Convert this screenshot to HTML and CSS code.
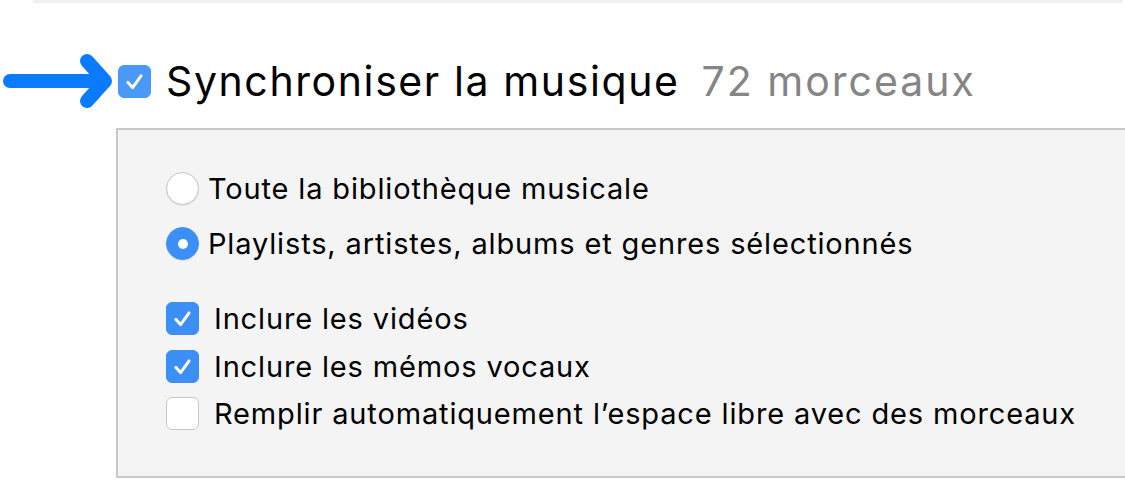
FILE: index.html
```html
<!DOCTYPE html>
<html>
<head>
    <title>Synchroniser la musique</title>
    <link rel="stylesheet" href="styles.css">
</head>
<body>
    <div class="top-rule"></div>

    <div class="sync-header">
        <svg class="pointer" width="114" height="60" viewBox="0 0 114 60">
            <path d="M10 30 H103 M87 10 L105 30 L87 50" fill="none" stroke="#0a7bff" stroke-width="14" stroke-linecap="round" stroke-linejoin="round"/>
        </svg>
        <span class="box box-main checked">
            <svg viewBox="0 0 33 33"><path d="M9.5 17.5 L14.5 23 L23.5 10.5"/></svg>
        </span>
        <h1>Synchroniser la musique<span class="count">72 morceaux</span></h1>
    </div>

    <div class="panel">
        <div class="radio-group">
            <div class="option">
                <span class="radio"></span>
                <span class="label">Toute la bibliothèque musicale</span>
            </div>
            <div class="option">
                <span class="radio selected"></span>
                <span class="label">Playlists, artistes, albums et genres sélectionnés</span>
            </div>
        </div>
        <div class="check-group">
            <div class="option">
                <span class="box checked">
                    <svg viewBox="0 0 33 33"><path d="M9.5 17.5 L14.5 23 L23.5 10.5"/></svg>
                </span>
                <span class="label">Inclure les vidéos</span>
            </div>
            <div class="option">
                <span class="box checked">
                    <svg viewBox="0 0 33 33"><path d="M9.5 17.5 L14.5 23 L23.5 10.5"/></svg>
                </span>
                <span class="label">Inclure les mémos vocaux</span>
            </div>
            <div class="option">
                <span class="box"></span>
                <span class="label">Remplir automatiquement l’espace libre avec des morceaux</span>
            </div>
        </div>
    </div>
</body>
</html>
```

FILE: styles.css
```css
:root {
    --blue: #3b8ff7;
    --arrow: #0a7bff;
    --panel-bg: #f4f4f4;
    --panel-border: #c9c9c9;
    --gray-text: #858585;
    --font-family-body: 'Inter', 'Noto Sans', sans-serif;
}

* { box-sizing: border-box; margin: 0; padding: 0; }

body {
    background: #fff;
    font-family: var(--font-family-body);
    color: #000;
    width: 1125px;
    height: 500px;
    overflow: hidden;
}

.top-rule {
    margin-left: 33px;
    width: 1090px;
    height: 3px;
    background: #f0f0f0;
}

.sync-header {
    display: flex;
    align-items: center;
    margin-top: 48px;
    height: 60px;
}

.pointer {
    flex: none;
}

.box {
    flex: none;
    width: 33px;
    height: 33px;
    border-radius: 6px;
    background: #fff;
    border: 1px solid #c8c8c8;
    display: flex;
    align-items: center;
    justify-content: center;
}

.box.checked {
    background: var(--blue);
    border-color: var(--blue);
}

.box svg {
    width: 33px;
    height: 33px;
}

.box svg path {
    fill: none;
    stroke: #fff;
    stroke-width: 3.2;
    stroke-linecap: round;
    stroke-linejoin: round;
}

.box-main {
    margin-left: 4px;
    margin-right: 15px;
}

.box-main.checked {
    background: #4a98f8;
    border-color: #4a98f8;
}

h1 {
    font-size: 41px;
    font-weight: 400;
    letter-spacing: 1.6px;
    white-space: nowrap;
}

.count {
    color: var(--gray-text);
    margin-left: 22px;
    letter-spacing: 2px;
}

.panel {
    margin-top: 17px;
    margin-left: 116px;
    height: 350px;
    background: var(--panel-bg);
    border: 2px solid var(--panel-border);
    border-right: none;
    padding: 42px 0 0 48px;
}

.radio-group {
    display: flex;
    flex-direction: column;
    gap: 22px;
}

.check-group {
    display: flex;
    flex-direction: column;
    gap: 14.5px;
    margin-top: 42px;
}

.option {
    display: flex;
    align-items: center;
    height: 33px;
}

.label {
    font-size: 29px;
    letter-spacing: 0.85px;
    white-space: nowrap;
}

.radio {
    flex: none;
    width: 33px;
    height: 33px;
    border-radius: 50%;
    background: #fff;
    border: 1px solid #c4c4c4;
    box-shadow: 0 1px 1px rgba(0, 0, 0, 0.08);
    margin-right: 9px;
    display: flex;
    align-items: center;
    justify-content: center;
}

.radio.selected {
    background: var(--blue);
    border-color: var(--blue);
}

.radio.selected::after {
    content: "";
    width: 10px;
    height: 10px;
    border-radius: 50%;
    background: #fff;
}

.check-group .box {
    margin-right: 15px;
}
```
